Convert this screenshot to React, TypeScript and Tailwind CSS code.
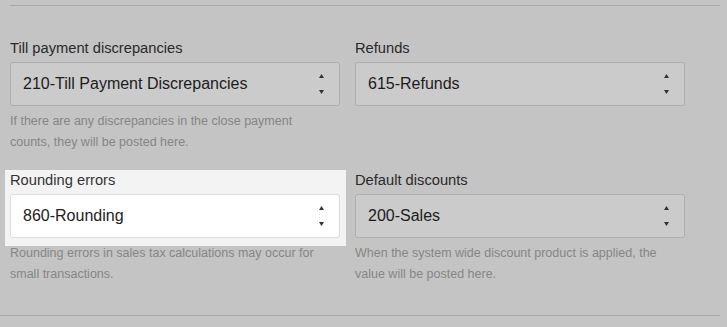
import React from "react";

function Arrows() {
  return (
    <div className="flex flex-col items-center gap-[12px] mr-[15px]">
      <svg width="5" height="4" viewBox="0 0 5 4"><path d="M2.5 0 L5 4 L0 4 Z" fill="#333" /></svg>
      <svg width="5" height="4" viewBox="0 0 5 4"><path d="M0 0 L5 0 L2.5 4 Z" fill="#333" /></svg>
    </div>
  );
}

function Field({
  label,
  value,
  help,
  highlight,
}: {
  label: string;
  value: string;
  help?: string;
  highlight?: boolean;
}) {
  return (
    <div className="flex flex-col">
      <div
        className={
          highlight
            ? "bg-[#f3f3f3] -mx-[5px] px-[5px] pb-[8px] -mb-[8px] w-[341px]"
            : ""
        }
      >
        <div
          className={
            "h-[20px] leading-[20px] text-[14.7px] " +
            (highlight ? "text-[#333]" : "text-[#2a2a2a]")
          }
        >
          {label}
        </div>
        <div
          className={
            "mt-[4px] h-[44px] w-[330px] rounded-[3px] border flex items-center justify-between " +
            (highlight
              ? "bg-white border-[#dcdcdc] text-[#222]"
              : "bg-[#cbcbcb] border-[#aeaeae] text-[#1c1c1c]")
          }
        >
          <span className="pl-[12px] text-[16px]">{value}</span>
          <Arrows />
        </div>
      </div>
      {help && (
        <div className="mt-[5px] text-[12.5px] leading-[21px] text-[#868686] w-[320px]">{help}</div>
      )}
    </div>
  );
}

export default function App() {
  return (
    <div
      className="w-[727px] h-[327px] bg-[#c4c4c4] overflow-hidden"
      style={{ fontFamily: '"Liberation Sans", Arial, sans-serif' }}
    >
      <div className="pt-[5px] pl-[10px] pr-[7px]">
        <div className="h-px bg-[#a9a9a9]" />
      </div>
      <div className="pl-[10px] pt-[32px] grid grid-cols-[330px_330px] gap-x-[15px] gap-y-[17px]">
        <Field
          label="Till payment discrepancies"
          value="210-Till Payment Discrepancies"
          help="If there are any discrepancies in the close payment counts, they will be posted here."
        />
        <Field label="Refunds" value="615-Refunds" />
        <Field
          label="Rounding errors"
          value="860-Rounding"
          help="Rounding errors in sales tax calculations may occur for small transactions."
          highlight
        />
        <Field
          label="Default discounts"
          value="200-Sales"
          help="When the system wide discount product is applied, the value will be posted here."
        />
      </div>
      <div className="mt-[30px] pr-[7px]">
        <div className="h-px bg-[#a9a9a9]" />
      </div>
    </div>
  );
}
